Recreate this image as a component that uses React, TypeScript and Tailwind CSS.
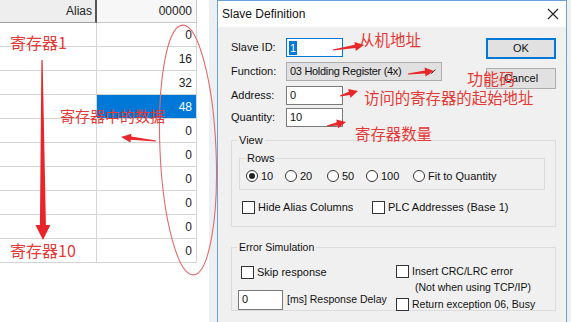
import { FC } from "react";

const values = [0, 16, 32, 48, 0, 0, 0, 0, 0, 0];

// tapered arrow polygon, tail thin, head triangular
const arrow = (x1: number, y1: number, x2: number, y2: number, head = 9, hw = 4.5, tail = 0.6, neck = 1.6) => {
  const dx = x2 - x1;
  const dy = y2 - y1;
  const len = Math.hypot(dx, dy);
  const ux = dx / len;
  const uy = dy / len;
  const px = -uy;
  const py = ux;
  const bx = x2 - ux * head;
  const by = y2 - uy * head;
  const pts = [
    [x1 + px * tail, y1 + py * tail],
    [bx + px * neck, by + py * neck],
    [bx + px * hw, by + py * hw],
    [x2, y2],
    [bx - px * hw, by - py * hw],
    [bx - px * neck, by - py * neck],
    [x1 - px * tail, y1 - py * tail],
  ];
  return pts.map((p) => p.join(",")).join(" ");
};

const Check: FC<{ label: string }> = ({ label }) => (
  <div className="flex items-center gap-[3px]">
    <div className="w-[13px] h-[13px] border border-[#333] bg-white" />
    <span>{label}</span>
  </div>
);

const Radio: FC<{ label: string; on?: boolean; w: string }> = ({ label, on, w }) => (
  <div className={`flex items-center gap-[3px] ${w}`}>
    <div className="w-[12px] h-[12px] rounded-full border border-[#333] bg-white flex items-center justify-center">
      {on && <div className="w-[6px] h-[6px] rounded-full bg-[#222]" />}
    </div>
    <span className="text-[11px]">{label}</span>
  </div>
);

const RegisterTable: FC = () => (
  <div className="w-[197px] flex flex-col text-[12px] text-[#222] font-['Liberation_Sans',sans-serif]">
    <div className="flex h-[23px]">
      <div className="w-[97px] bg-[#eeeeee] border-b border-[#a0a0a0] border-r-2 border-r-[#555] flex items-center justify-end pr-[3px]">
        Alias
      </div>
      <div className="flex-1 bg-[#f7f7f7] border-b border-r border-[#c8c8c8] flex items-center justify-end pr-[4px]">
        00000
      </div>
    </div>
    {values.map((v, i) => (
      <div key={i} className="flex h-[24px]">
        <div className="w-[97px] border-b border-r border-[#d4d4d4] bg-white" />
        <div
          className={`flex-1 border-b border-r border-[#d4d4d4] flex items-center justify-end pr-[4px] ${
            i === 3 ? "bg-[#0078d7] text-white" : "bg-white"
          }`}
        >
          {v}
        </div>
      </div>
    ))}
  </div>
);

const SlaveDialog: FC = () => (
  <div className="w-[350px] h-[322px] border border-[#6aa3dc] border-b-0 flex flex-col bg-[#f0f0f0] text-[10.5px] text-[#111] font-['Liberation_Sans',sans-serif]">
    <div className="h-[26px] bg-white flex items-center justify-between pl-[4px] pr-[7px]">
      <span className="text-[12px]">Slave Definition</span>
      <svg width="12" height="12" viewBox="0 0 12 12">
        <path d="M1 1 L11 11 M11 1 L1 11" stroke="#222" strokeWidth="1.1" />
      </svg>
    </div>

    <div className="flex-1 pl-[13px] pr-[10px]">
      <div className="flex justify-between pt-[11px] h-[107px]">
        <div className="flex flex-col text-[11px]">
          <div className="flex items-center h-[19px]">
            <span className="w-[55px]">Slave ID:</span>
            <div className="w-[57px] h-[19px] border border-[#0078d7] bg-white flex items-center px-[2px]">
              <span className="bg-[#0078d7] text-white px-[1px] leading-[14px]">1</span>
            </div>
          </div>
          <div className="flex items-center h-[19px] mt-[5px]">
            <span className="w-[55px]">Function:</span>
            <div className="w-[156px] h-[19px] border border-[#adadad] bg-[#e1e1e1] flex items-center justify-between pl-[3px] pr-[5px]">
              <span className="tracking-[-0.3px]">03 Holding Register (4x)</span>
              <svg width="9" height="6" viewBox="0 0 9 6">
                <path d="M0.5 0.5 L4.5 4.5 L8.5 0.5" stroke="#333" strokeWidth="1" fill="none" />
              </svg>
            </div>
          </div>
          <div className="flex items-center h-[19px] mt-[5px]">
            <span className="w-[55px]">Address:</span>
            <div className="w-[57px] h-[19px] border border-[#7a7a7a] bg-white flex items-center px-[3px]">0</div>
          </div>
          <div className="flex items-center h-[19px] mt-[3px]">
            <span className="w-[55px]">Quantity:</span>
            <div className="w-[57px] h-[19px] border border-[#7a7a7a] bg-white flex items-center px-[3px]">10</div>
          </div>
        </div>
        <div className="flex flex-col w-[70px] text-[11px]">
          <div className="h-[21px] border-2 border-[#0078d7] bg-[#e1e1e1] flex items-center justify-center">OK</div>
          <div className="h-[21px] mt-[9px] border border-[#adadad] bg-[#e1e1e1] flex items-center justify-center">
            Cancel
          </div>
        </div>
      </div>

      <fieldset className="border border-[#dcdcdc] h-[93px]">
        <legend className="ml-[5px] px-[2px] leading-[13px] text-[11px]">View</legend>
        <fieldset className="border border-[#dcdcdc] h-[38px] mt-[5px] ml-[7px] mr-[10px]">
          <legend className="ml-[6px] px-[1px] leading-[13px] text-[11px]">Rows</legend>
          <div className="flex items-center mt-[3px] pl-[6px]">
            <Radio label="10" on w="w-[39px]" />
            <Radio label="20" w="w-[42px]" />
            <Radio label="50" w="w-[39px]" />
            <Radio label="100" w="w-[47px]" />
            <Radio label="Fit to Quantity" w="" />
          </div>
        </fieldset>
        <div className="flex items-center mt-[9px] pl-[10px] text-[11px]">
          <div className="w-[130px]">
            <Check label="Hide Alias Columns" />
          </div>
          <Check label="PLC Addresses (Base 1)" />
        </div>
      </fieldset>

      <fieldset className="border border-[#dcdcdc] h-[70px] mt-[14px]">
        <legend className="ml-[5px] px-[2px] leading-[13px]">Error Simulation</legend>
        <div className="flex">
          <div className="w-[164px] pl-[6px] flex flex-col">
            <div className="mt-[10px] ml-[3px] text-[11px]">
              <Check label="Skip response" />
            </div>
            <div className="flex items-center gap-[4px] mt-[9px]">
              <div className="w-[45px] h-[20px] border border-[#7a7a7a] bg-white flex items-center px-[3px] text-[11px]">0</div>
              <span>[ms] Response Delay</span>
            </div>
          </div>
          <div className="flex flex-col mt-[10px]">
            <Check label="Insert CRC/LRC error" />
            <span className="pl-[19px] leading-[13px] mt-[1px]">(Not when using TCP/IP)</span>
            <div className="mt-[3px]">
              <Check label="Return exception 06, Busy" />
            </div>
          </div>
        </div>
      </fieldset>
    </div>
  </div>
);

const App: FC = () => {
  return (
    <div className="relative w-[571px] h-[322px] overflow-hidden bg-white flex">
      <RegisterTable />
      <div className="w-[12px] bg-white" />
      <div className="w-[8px] bg-[#edf0f3]" />
      <SlaveDialog />
      <div className="flex-1 bg-[#eef0f2]" />

      {/* red annotations laid over the screenshot */}
      <svg className="absolute inset-0 pointer-events-none" width="571" height="322">
        <ellipse cx="188" cy="150" rx="28" ry="125" transform="rotate(-2.5 188 150)" fill="none" stroke="#e46a6a" strokeWidth="1.1" />
        <polygon points={arrow(42, 60, 43, 240, 15, 7.5, 0.6, 3)} fill="#e8262a" />
        <polygon points={arrow(156, 141, 121, 137, 10, 4.5)} fill="#e8262a" />
        <polygon points={arrow(333, 50, 364, 45)} fill="#e8262a" />
        <polygon points={arrow(408, 74, 434, 71)} fill="#e8262a" />
        <polygon points={arrow(340, 96, 358, 91)} fill="#e8262a" />
        <polygon points={arrow(327, 126, 346, 122)} fill="#e8262a" />
      </svg>
      <div className="absolute inset-0 pointer-events-none text-[#e53935] leading-none font-['Noto_Sans_CJK_SC',sans-serif]">
        <span className="absolute left-[10px] top-[34px] text-[16px]">寄存器1</span>
        <span className="absolute left-[10px] top-[242px] text-[16px]">寄存器10</span>
        <span className="absolute left-[60px] top-[108px] text-[15px]">寄存器中的数据</span>
        <span className="absolute left-[359px] top-[32px] text-[15.5px]">从机地址</span>
        <span className="absolute left-[467px] top-[70px] text-[16px]">功能码</span>
        <span className="absolute left-[364px] top-[90px] text-[15.4px]">访问的寄存器的起始地址</span>
        <span className="absolute left-[355px] top-[126px] text-[15.4px]">寄存器数量</span>
      </div>
    </div>
  );
};

export default App;
